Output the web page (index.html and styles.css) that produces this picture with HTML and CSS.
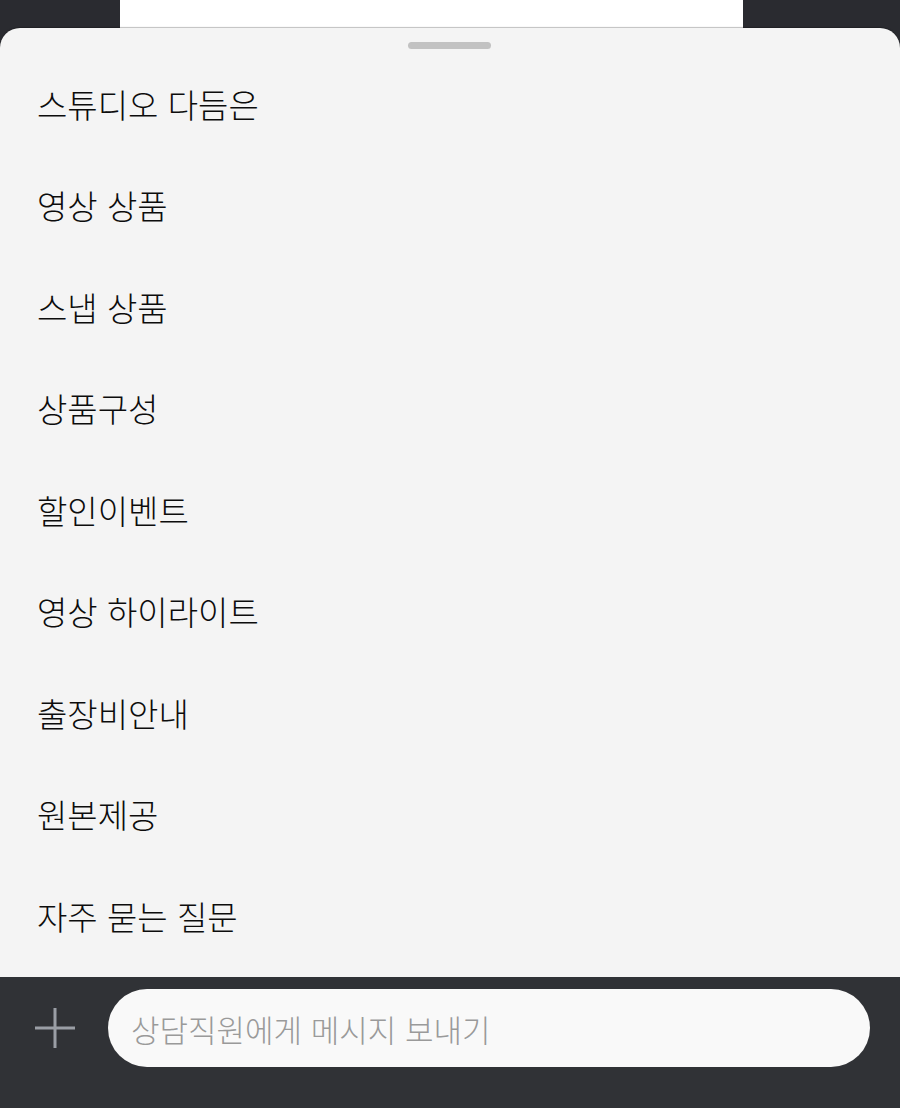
FILE: index.html
```html
<!DOCTYPE html>
<html lang="ko">
<head>
  <meta charset="UTF-8" />
  <meta name="viewport" content="width=device-width, initial-scale=1.0"/>
  <title>상담 메뉴</title>
  <link rel="stylesheet" href="styles.css">
</head>
<body>
  <div class="backdrop">
    <div class="page-peek"></div>
  </div>

  <div class="sheet">
    <div class="handle"></div>
    <ul class="menu">
      <li>스튜디오 다듬은</li>
      <li>영상 상품</li>
      <li>스냅 상품</li>
      <li>상품구성</li>
      <li>할인이벤트</li>
      <li>영상 하이라이트</li>
      <li>출장비안내</li>
      <li>원본제공</li>
      <li>자주 묻는 질문</li>
    </ul>
  </div>

  <div class="composer">
    <button class="attach" aria-label="첨부">
      <svg width="42" height="42" viewBox="0 0 42 42">
        <path d="M21 1 V41 M1 21 H41" stroke="#9a9ea5" stroke-width="3" fill="none"/>
      </svg>
    </button>
    <div class="message-input">상담직원에게 메시지 보내기</div>
  </div>
</body>
</html>
```

FILE: styles.css
```css
html, body {
  margin: 0;
  height: 100%;
}
body {
  background: #2a2b30;
  font-family: "Noto Sans CJK KR", "Noto Sans", sans-serif;
  display: flex;
  flex-direction: column;
  overflow: hidden;
}
.backdrop {
  height: 28px;
  display: flex;
}
.page-peek {
  width: 623px;
  margin-left: 120px;
  background: #fff;
}
.sheet {
  flex: 1;
  background: #f4f4f4;
  border-radius: 20px 20px 0 0;
  box-shadow: 0 -1px 1px rgba(0, 0, 0, 0.25);
  padding-top: 14px;
  display: flex;
  flex-direction: column;
}
.handle {
  width: 83px;
  height: 7px;
  border-radius: 4px;
  background: #c2c2c2;
  align-self: center;
  margin-left: -1px;
}
.menu {
  list-style: none;
  margin: 4px 0 0;
  padding: 0;
}
.menu li {
  height: 101.5px;
  display: flex;
  align-items: center;
  padding-left: 37px;
  font-size: 33px;
  font-weight: 300;
  color: #0c0c0c;
}
.composer {
  height: 131px;
  background: #303236;
  display: flex;
  align-items: flex-start;
  padding: 12px 30px 0 34px;
  box-sizing: border-box;
  gap: 32px;
}
.attach {
  background: none;
  border: 0;
  padding: 0;
  margin-top: 18px;
  width: 42px;
  height: 42px;
}
.attach svg {
  display: block;
}
.message-input {
  flex: 1;
  height: 78px;
  border-radius: 39px;
  background: #f9f9f9;
  display: flex;
  align-items: center;
  padding-left: 23px;
  font-size: 31px;
  font-weight: 300;
  color: #9a9a9a;
}
```
